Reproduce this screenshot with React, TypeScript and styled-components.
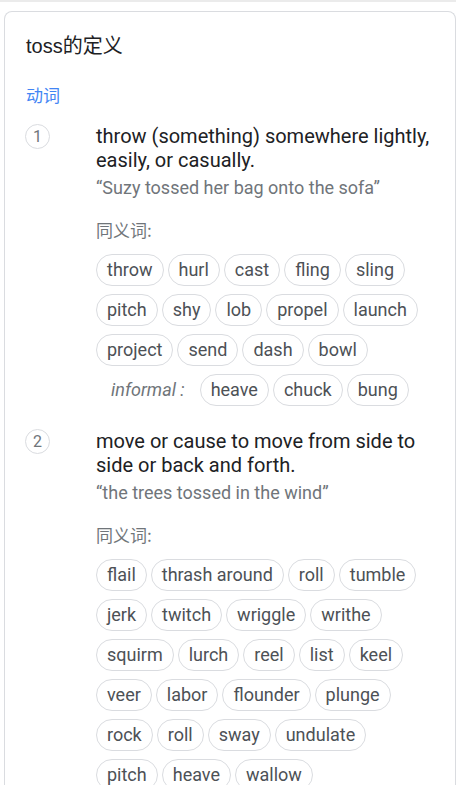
import React from "react";
import styled, { createGlobalStyle } from "styled-components";

const Global = createGlobalStyle`
  html, body { margin: 0; padding: 0; background: #fff; }
  body { font-family: Roboto, "Noto Sans CJK SC", Arial, sans-serif; overflow: hidden; }
`;

const Page = styled.div`
  width: 456px;
  height: 785px;
  overflow: hidden;
`;

const TopRule = styled.div`
  height: 2px;
  background: #ebebeb;
`;

const Card = styled.section`
  margin: 9px 0 0 4px;
  border: 1px solid #dadce0;
  border-bottom: none;
  border-radius: 8px 8px 0 0;
  padding: 22px 0 0 20px;
`;

const Title = styled.h1`
  margin: 0;
  font-family: "Liberation Sans", "Noto Sans CJK SC", sans-serif;
  font-weight: 400;
  font-size: 20px;
  line-height: 24px;
  color: #202124;
  padding-left: 1px;
`;

const Pos = styled.div`
  margin-top: 25px;
  font-family: "Noto Sans CJK SC", sans-serif;
  font-size: 17px;
  line-height: 24px;
  color: #4285f4;
  padding-left: 1px;
`;

const Sense = styled.div<{ $first?: boolean }>`
  display: grid;
  grid-template-columns: 71px 1fr;
  margin-top: ${(p) => (p.$first ? "17px" : "23px")};
`;

const Num = styled.div`
  width: 25px;
  height: 25px;
  box-sizing: border-box;
  border: 1px solid #dadce0;
  border-radius: 50%;
  display: flex;
  align-items: center;
  justify-content: center;
  font-size: 16px;
  color: #70757a;
`;

const Body = styled.div`
  display: flex;
  flex-direction: column;
`;

const Def = styled.div`
  font-size: 20px;
  line-height: 24px;
  color: #202124;
`;

const Example = styled.div`
  margin-top: 4px;
  font-size: 18px;
  line-height: 24px;
  color: #70757a;
`;

const SynLabel = styled.div`
  margin-top: 18px;
  font-family: "Noto Sans CJK SC", sans-serif;
  font-size: 17px;
  line-height: 24px;
  color: #70757a;
`;

const ChipStack = styled.div`
  margin-top: 12px;
  display: flex;
  flex-direction: column;
  row-gap: 8px;
`;

const ChipRow = styled.div`
  display: flex;
  column-gap: 4px;
  align-items: center;
`;

const Chip = styled.span`
  box-sizing: border-box;
  height: 32px;
  padding: 0 10px;
  border: 1px solid #dadce0;
  border-radius: 16px;
  font-size: 18px;
  line-height: 30px;
  color: #4d5156;
  white-space: nowrap;
`;

const Informal = styled.span`
  height: 32px;
  margin: 0 11px 0 15px;
  font-size: 18px;
  line-height: 32px;
  font-style: italic;
  color: #70757a;
  white-space: nowrap;
`;

type SenseData = {
  n: number;
  def: string;
  ex: string;
  rows: string[][];
  informal?: string[];
};

const senses: SenseData[] = [
  {
    n: 1,
    def: "throw (something) somewhere lightly, easily, or casually.",
    ex: "“Suzy tossed her bag onto the sofa”",
    rows: [
      ["throw", "hurl", "cast", "fling", "sling"],
      ["pitch", "shy", "lob", "propel", "launch"],
      ["project", "send", "dash", "bowl"],
    ],
    informal: ["heave", "chuck", "bung"],
  },
  {
    n: 2,
    def: "move or cause to move from side to side or back and forth.",
    ex: "“the trees tossed in the wind”",
    rows: [
      ["flail", "thrash around", "roll", "tumble"],
      ["jerk", "twitch", "wriggle", "writhe"],
      ["squirm", "lurch", "reel", "list", "keel"],
      ["veer", "labor", "flounder", "plunge"],
      ["rock", "roll", "sway", "undulate"],
      ["pitch", "heave", "wallow"],
    ],
  },
];

export default function App() {
  return (
    <Page>
      <Global />
      <TopRule />
      <Card>
        <Title>toss的定义</Title>
        <Pos>动词</Pos>
        {senses.map((s, i) => (
          <Sense key={s.n} $first={i === 0}>
            <Num>{s.n}</Num>
            <Body>
              <Def>{s.def}</Def>
              <Example>{s.ex}</Example>
              <SynLabel>同义词:</SynLabel>
              <ChipStack>
                {s.rows.map((row, ri) => (
                  <ChipRow key={ri}>
                    {row.map((w, wi) => (
                      <Chip key={wi}>{w}</Chip>
                    ))}
                  </ChipRow>
                ))}
                {s.informal && (
                  <ChipRow>
                    <Informal>informal :</Informal>
                    {s.informal.map((w, wi) => (
                      <Chip key={wi}>{w}</Chip>
                    ))}
                  </ChipRow>
                )}
              </ChipStack>
            </Body>
          </Sense>
        ))}
      </Card>
    </Page>
  );
}
